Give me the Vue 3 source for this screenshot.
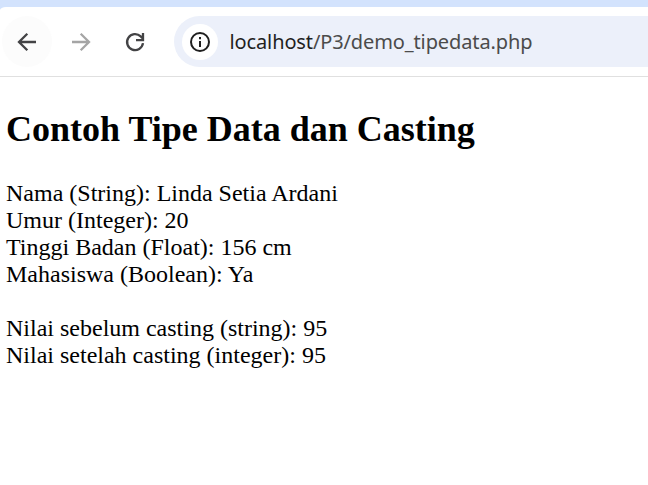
<script setup>
const person = [
  'Nama (String): Linda Setia Ardani',
  'Umur (Integer): 20',
  'Tinggi Badan (Float): 156 cm',
  'Mahasiswa (Boolean): Ya',
]
const casting = [
  'Nilai sebelum casting (string): 95',
  'Nilai setelah casting (integer): 95',
]
</script>

<template>
  <div class="window">
    <header class="toolbar">
      <button class="nav back" aria-label="Back">
        <svg width="24" height="24" viewBox="0 0 24 24"><path d="M21 12H4.8M12.3 3.7L4 12L12.3 20.3" /></svg>
      </button>
      <button class="nav forward" aria-label="Forward">
        <svg width="24" height="24" viewBox="0 0 24 24"><path d="M3 12H19.2M11.7 3.7L20 12L11.7 20.3" /></svg>
      </button>
      <button class="nav reload" aria-label="Reload">
        <svg width="24" height="24" viewBox="0 0 24 24"><path d="M20 13.2A8 8 0 1 1 17.7 6.4L20 8.7M20 3V10.2H13" /></svg>
      </button>
      <div class="address">
        <span class="info">
          <svg width="24" height="24" viewBox="0 0 24 24"><circle cx="12" cy="12" r="9" /><path d="M12 11V17M12 7V9.2" /></svg>
        </span>
        <span class="url"><span class="host">localhost</span>/P3/demo_tipedata.php</span>
      </div>
    </header>
    <main class="page">
      <h1>Contoh Tipe Data dan Casting</h1>
      <p><span v-for="line in person" :key="line">{{ line }}</span></p>
      <p><span v-for="line in casting" :key="line">{{ line }}</span></p>
    </main>
  </div>
</template>

<style>
body { background: #fff; overflow: hidden; }
</style>

<style scoped>
.window { height: 485px; box-sizing: border-box; padding-top: 7px; overflow: hidden; background: linear-gradient(#d3e3fd 16px, #fff 16px); }
.toolbar { display: flex; align-items: center; height: 70px; box-sizing: border-box; border-bottom: 1px solid #e0e0e0; border-top-left-radius: 6px 3px; background: #fff; }
.nav { display: grid; place-items: center; flex: none; width: 50px; height: 51px; margin: 0 4px 0 0; padding: 0; border: 0; border-radius: 50%; background: none; }
.nav.back { margin-left: 2px; background: #fcfcfc; }
.nav svg, .info svg { fill: none; stroke: #434345; stroke-width: 2.3; }
.nav.forward svg { stroke: #a5a5a5; }
.info svg { stroke: #1f1f1f; stroke-width: 2; }
.address { display: flex; align-items: center; flex: 1; height: 51px; margin-left: 10px; padding-left: 8px; border-radius: 26px 0 0 26px; background: #ecf0fa; }
.info { display: grid; place-items: center; width: 36px; height: 36px; margin-right: 11.5px; border-radius: 50%; background: #fff; }
.url { font: 20px "Noto Sans", sans-serif; letter-spacing: -0.12px; color: #4b4b4b; white-space: nowrap; }
.host { color: #1f1f1f; }
.page { padding: 31px 6px 0; color: #000; font: 24px/27px "Liberation Serif", serif; }
h1 { margin: 0 0 29px; font-size: 36px; line-height: 43px; white-space: nowrap; }
p { margin: 0 0 27px; }
p span { display: block; white-space: nowrap; }
</style>
